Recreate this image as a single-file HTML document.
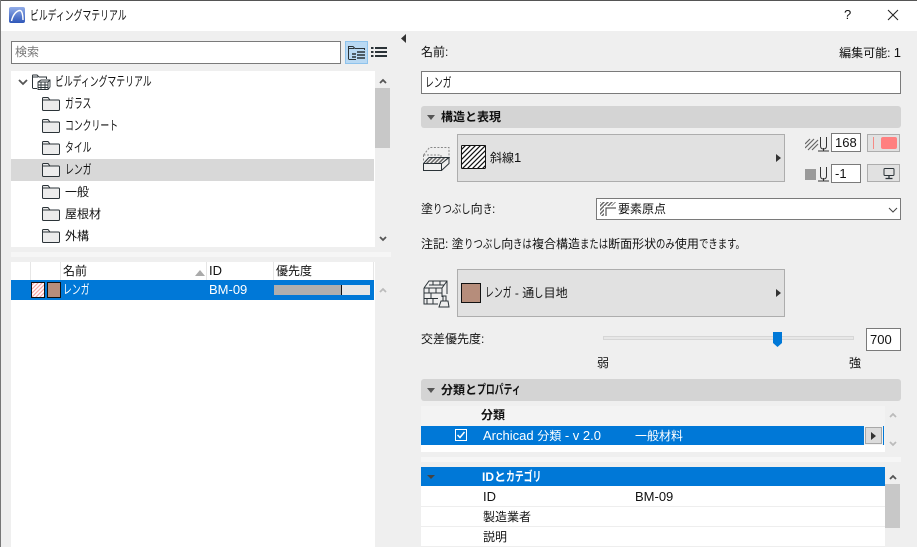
<!DOCTYPE html>
<html><head><meta charset="utf-8"><style>
html,body{margin:0;padding:0;width:917px;height:547px;overflow:hidden;background:#efefef}
body{position:relative;font:12px/16px "Liberation Sans","Noto Sans CJK JP",sans-serif;color:#111}
.a,.t,svg.a{position:absolute}
.t{white-space:nowrap;height:16px;line-height:16px}
.inp{position:absolute;box-sizing:border-box;background:#fff;border:1px solid #7a7a7a}
.btn{position:absolute;box-sizing:border-box;background:#e1e1e1;border:1px solid #adadad}
.sec{position:absolute;left:421px;width:480px;height:22px;background:#d4d4d4;border-radius:3px}
.b{font-weight:bold}
.w{color:#fff}
.l{font-size:13px}
.k{display:inline-block;font-size:13px;transform:scaleX(.68);transform-origin:0 50%;margin-right:calc(var(--n)*-4.16px)}
.h{display:inline-block;transform:scaleX(.78);transform-origin:0 50%;margin-right:calc(var(--n)*-2.64px)}
</style></head><body>
<svg width="0" height="0" style="position:absolute"><defs>
<symbol id="fd" viewBox="0 0 18 14"><path d="M.5 12.500V1.500Q.5.5 1.500.5H6L8 3H16.500Q17.500 3 17.500 4V12.500Q17.500 13.500 16.500 13.500H1.500Q.5 13.500.5 12.500Z" fill="#ececec" stroke="#2b3338"/><path d="M1 3H8" stroke="#2b3338" fill="none"/></symbol>
<pattern id="h1" width="5" height="5" patternUnits="userSpaceOnUse"><path d="M-1 6L6-1M-1 1L1-1M4 6L6 4" stroke="#111" stroke-width="1.200"/></pattern>
<pattern id="h2" width="4" height="4" patternUnits="userSpaceOnUse"><path d="M-1 5L5-1M-1 1L1-1M3 5L5 3" stroke="#f7a5a5" stroke-width="1.200"/></pattern>
<pattern id="h3" width="4" height="4" patternUnits="userSpaceOnUse"><path d="M-1 5L5-1M-1 1L1-1M3 5L5 3" stroke="#666" stroke-width="1.500"/></pattern>
<linearGradient id="lg" x1="0" y1="0" x2="0" y2="1"><stop offset="0" stop-color="#92ade8"/><stop offset="1" stop-color="#2f57b8"/></linearGradient>
</defs></svg>

<!-- frame & title -->
<div class="a" style="left:0;top:0;width:917px;height:31px;background:#fff"></div>
<div class="a" style="left:0;top:0;width:917px;height:1px;background:#555"></div>
<div class="a" style="left:0;top:0;width:1px;height:547px;background:#777"></div>
<svg class="a" style="left:9px;top:7px" width="16" height="16" viewBox="0 0 16 16"><rect width="16" height="16" rx="2" fill="url(#lg)"/><path d="M2.500 14C4 7 8 3.500 11 3.500C13 3.500 14 8 14 13" fill="none" stroke="#fff" stroke-width="1.400"/></svg>
<div class="t" style="left:30px;top:8px"><span class="k" style="--n:11">ビルディングマテリアル</span></div>
<div class="t" style="left:844px;top:7px;font-size:13px">?</div>
<svg class="a" style="left:887px;top:9px" width="12" height="12"><path d="M1 1L11 11M11 1L1 11" stroke="#222" fill="none"/></svg>

<!-- search -->
<div class="inp" style="left:11px;top:41px;width:330px;height:23px"></div>
<div class="t" style="left:15px;top:44px;color:#777">検索</div>
<div class="a" style="left:345px;top:41px;width:23px;height:23px;box-sizing:border-box;background:#b9d9f3;border:1px solid #8fc3ec"></div>
<svg class="a" style="left:348px;top:45px" width="18" height="16" fill="none" stroke="#2b3338"><path d="M.5 14V1.500H5L7 3.500H16.500V5M1 3.500H6M.5 14.500H8"/><path d="M9 7H17M9 10H17M9 13H17M4 9H8M4 12H8" stroke-width="1.500"/></svg>
<svg class="a" style="left:371px;top:46px" width="17" height="12" fill="#2b3338"><rect x="0" y="1" width="2.500" height="2"/><rect x="4" y="1" width="12" height="2"/><rect x="0" y="5" width="2.500" height="2"/><rect x="4" y="5" width="12" height="2"/><rect x="0" y="9" width="2.500" height="2"/><rect x="4" y="9" width="12" height="2"/></svg>
<svg class="a" style="left:401px;top:34px" width="5" height="9"><path d="M5 0V9L0 4.500Z" fill="#333"/></svg>

<!-- tree -->
<div class="a" style="left:11px;top:71px;width:364px;height:176px;background:#fff"></div>
<div class="a" style="left:11px;top:159px;width:363px;height:22px;background:#d8d8d8"></div>
<svg class="a" style="left:18px;top:79px" width="10" height="7"><path d="M1 1L5 5L9 1" stroke="#555" stroke-width="1.800" fill="none"/></svg>
<svg class="a" style="left:32px;top:74px" width="19" height="17" fill="none" stroke="#2b3338"><path d="M.5 14V1.500Q.5 1 1 1H5L7 3H14.500V5M1 3H6M.5 14.500H5"/><path d="M6 8L9 6H18V13L16 15.500H6ZM6 8H16V15.500M16 8L18 6M6 11H16M6 13.500H16M9 8V15.500M13 8V15.500" stroke-width=".9"/></svg>
<div class="t" style="left:55px;top:74px"><span class="k" style="--n:11">ビルディングマテリアル</span></div>
<svg class="a" style="left:42px;top:97px" width="18" height="14"><use href="#fd"/></svg><div class="t" style="left:65px;top:96px"><span class="k" style="--n:3">ガラス</span></div>
<svg class="a" style="left:42px;top:119px" width="18" height="14"><use href="#fd"/></svg><div class="t" style="left:65px;top:118px"><span class="k" style="--n:6">コンクリート</span></div>
<svg class="a" style="left:42px;top:141px" width="18" height="14"><use href="#fd"/></svg><div class="t" style="left:65px;top:140px"><span class="k" style="--n:3">タイル</span></div>
<svg class="a" style="left:42px;top:163px" width="18" height="14"><use href="#fd"/></svg><div class="t" style="left:65px;top:162px"><span class="k" style="--n:3">レンガ</span></div>
<svg class="a" style="left:42px;top:185px" width="18" height="14"><use href="#fd"/></svg><div class="t" style="left:65px;top:184px">一般</div>
<svg class="a" style="left:42px;top:207px" width="18" height="14"><use href="#fd"/></svg><div class="t" style="left:65px;top:206px">屋根材</div>
<svg class="a" style="left:42px;top:229px" width="18" height="14"><use href="#fd"/></svg><div class="t" style="left:65px;top:228px">外構</div>
<!-- tree scrollbar -->
<div class="a" style="left:375px;top:88px;width:15px;height:60px;background:#c8c8c8"></div>
<svg class="a" style="left:379px;top:78px" width="8" height="6"><path d="M1 5L4 2L7 5" stroke="#555" stroke-width="1.800" fill="none"/></svg>
<svg class="a" style="left:379px;top:236px" width="8" height="6"><path d="M1 1L4 4L7 1" stroke="#555" stroke-width="1.800" fill="none"/></svg>

<!-- splitter -->
<div class="a" style="left:11px;top:252px;width:380px;height:5px;background:#f6f6f6"></div>

<!-- list -->
<div class="a" style="left:11px;top:262px;width:364px;height:285px;background:#fff"></div>
<div class="a" style="left:30px;top:262px;width:1px;height:18px;background:#e6e6e6"></div>
<div class="a" style="left:60px;top:262px;width:1px;height:18px;background:#e6e6e6"></div>
<div class="a" style="left:206px;top:262px;width:1px;height:18px;background:#e6e6e6"></div>
<div class="a" style="left:273px;top:262px;width:1px;height:18px;background:#e6e6e6"></div>
<div class="a" style="left:373px;top:262px;width:1px;height:18px;background:#e6e6e6"></div>
<div class="t" style="left:63px;top:263px">名前</div>
<svg class="a" style="left:195px;top:270px" width="10" height="6"><path d="M0 6L5 0L10 6Z" fill="#aaa"/></svg>
<div class="t l" style="left:209px;top:263px">ID</div>
<div class="t" style="left:276px;top:263px">優先度</div>
<div class="a" style="left:11px;top:280px;width:363px;height:20px;background:#0078d7"></div>
<svg class="a" style="left:31px;top:282px" width="14" height="16"><rect width="14" height="16" fill="#fff"/><rect width="14" height="16" fill="url(#h2)"/><rect x=".5" y=".5" width="13" height="15" fill="none" stroke="#111"/></svg>
<div class="a" style="left:47px;top:282px;width:14px;height:16px;box-sizing:border-box;background:#b68d7b;border:1px solid #111"></div>
<div class="t w" style="left:63px;top:282px"><span class="k" style="--n:3">レンガ</span></div>
<div class="t w l" style="left:209px;top:282px">BM-09</div>
<div class="a" style="left:274px;top:285px;width:96px;height:10px;background:#e6e6e6"></div>
<div class="a" style="left:274px;top:285px;width:67px;height:10px;background:#aeaeae"></div>
<div class="a" style="left:341px;top:285px;width:1px;height:10px;background:#111"></div>
<svg class="a" style="left:379px;top:287px" width="8" height="6"><path d="M1 5L4 2L7 5" stroke="#bbb" stroke-width="1.800" fill="none"/></svg>

<!-- right header -->
<div class="t" style="left:421px;top:44px">名前:</div>
<div class="t" style="right:16px;top:45px">編集可能: <span class="l">1</span></div>
<div class="inp" style="left:421px;top:71px;width:480px;height:23px"></div>
<div class="t" style="left:425px;top:75px"><span class="k" style="--n:3">レンガ</span></div>

<!-- section 1 -->
<div class="sec" style="top:106px"></div>
<svg class="a" style="left:427px;top:115px" width="8" height="5"><path d="M0 0H8L4 5Z" fill="#555"/></svg>
<div class="t b" style="left:441px;top:109px">構造と表現</div>
<svg class="a" style="left:423px;top:147px" width="27" height="25" fill="none" stroke="#2b3338"><path d="M.5 8L6.500.5H26V10M.5 8V15M.5 8H18V10" stroke="#888" stroke-dasharray="2 1.500"/><path d="M.5 16.500L6 10.500H26L18.500 16.500Z" fill="url(#h3)"/><path d="M.5 16.500V23.500H18.500V16.500H.5M18.500 23.500L26 16.500V10.500"/></svg>
<div class="btn" style="left:457px;top:134px;width:328px;height:48px"></div>
<svg class="a" style="left:461px;top:145px" width="25" height="24"><rect width="25" height="24" rx="1" fill="#fff"/><rect width="25" height="24" rx="1" fill="url(#h1)"/><rect x=".5" y=".5" width="24" height="23" rx="1" fill="none" stroke="#111"/></svg>
<div class="t" style="left:490px;top:150px">斜線<span class="l">1</span></div>
<svg class="a" style="left:776px;top:154px" width="5" height="8"><path d="M0 0L5 4L0 8Z" fill="#333"/></svg>

<svg class="a" style="left:805px;top:136px" width="26" height="16" fill="none"><path d="M0 12L9 3M3 14L13 4M7 14L13 8M0 8L5 3" stroke="#666" stroke-width="1.200"/><path d="M15.500 1V10Q15.500 13 18.500 13Q21.500 13 21.500 10V1" stroke="#333"/><path d="M13 15H24M18.500 12V15" stroke="#333"/></svg>
<div class="inp" style="left:831px;top:133px;width:30px;height:19px"></div>
<div class="t l" style="left:835px;top:135px">168</div>
<div class="btn" style="left:867px;top:134px;width:33px;height:18px"></div>
<div class="a" style="left:873px;top:137px;width:1px;height:12px;background:#f58a85"></div>
<div class="a" style="left:881px;top:137px;width:16px;height:12px;background:#ff8080;border-radius:2px"></div>

<div class="a" style="left:805px;top:169px;width:11px;height:11px;background:#9a9a9a"></div>
<svg class="a" style="left:818px;top:166px" width="13" height="16" fill="none"><path d="M2.500 1V10Q2.500 13 5.500 13Q8.500 13 8.500 10V1" stroke="#333"/><path d="M0 15H11M5.500 12V15" stroke="#333"/></svg>
<div class="inp" style="left:831px;top:164px;width:30px;height:19px"></div>
<div class="t l" style="left:835px;top:166px">-1</div>
<div class="btn" style="left:867px;top:164px;width:33px;height:18px"></div>
<svg class="a" style="left:883px;top:168px" width="13" height="12" fill="none" stroke="#2b3338"><rect x="1" y=".5" width="10" height="7" rx="1"/><path d="M6 8V10M2.500 10.500H9.500" stroke-width="1.300"/></svg>

<div class="t" style="left:421px;top:201px">塗<span class="h" style="--n:4">りつぶし</span>向<span class="h" style="--n:1">き</span>:</div>
<div class="inp" style="left:596px;top:198px;width:305px;height:22px"></div>
<svg class="a" style="left:600px;top:202px" width="17" height="14"><path d="M0 0H16L12 4H4V14H0Z" fill="#fff"/><path d="M0 0H16L12 4H4V14H0Z" fill="url(#h3)"/><path d="M6 14V6H16" stroke="#333" fill="none"/></svg>
<div class="t" style="left:618px;top:201px">要素原点</div>
<svg class="a" style="left:888px;top:207px" width="10" height="6"><path d="M1 1L5 5L9 1" stroke="#444" fill="none"/></svg>

<div class="t" style="left:421px;top:236px">注記: 塗<span class="h" style="--n:4">りつぶし</span>向<span class="h" style="--n:2">きは</span>複合構造<span class="h" style="--n:3">または</span>断面形状<span class="h" style="--n:2">のみ</span>使用<span class="h" style="--n:5">できます。</span></div>

<!-- building material -->
<svg class="a" style="left:423px;top:280px" width="28" height="28" fill="none" stroke="#2b3338"><path d="M1 8L6 1H24V14M1 8H19V17M19 8L24 1M1 8V24H15M1 13H19M1 18.500H15M6 8V13M13 8V13M8 13V18.500M4 18.500V24M10 18.500V24M6 5H21M10 1V5M17 1V5"/><path d="M20 16H23V21H20ZM18 21H25L26 27H16Z" fill="#eee"/></svg>
<div class="btn" style="left:457px;top:269px;width:328px;height:48px"></div>
<div class="a" style="left:461px;top:283px;width:20px;height:20px;box-sizing:border-box;background:#b68d7b;border:1px solid #111"></div>
<div class="t" style="left:485px;top:285px"><span class="k" style="--n:3">レンガ</span> - 通<span class="h" style="--n:1">し</span>目地</div>
<svg class="a" style="left:776px;top:289px" width="5" height="8"><path d="M0 0L5 4L0 8Z" fill="#333"/></svg>

<div class="t" style="left:421px;top:331px">交差優先度:</div>
<div class="a" style="left:603px;top:336px;width:251px;height:4px;box-sizing:border-box;background:#e7e7e7;border:1px solid #d6d6d6"></div>
<svg class="a" style="left:773px;top:332px" width="9" height="15"><path d="M0 0H9V11L4.500 15L0 11Z" fill="#0078d7"/></svg>
<div class="inp" style="left:866px;top:328px;width:35px;height:23px"></div>
<div class="t l" style="left:870px;top:332px">700</div>
<div class="t" style="left:597px;top:355px">弱</div>
<div class="t" style="left:849px;top:355px">強</div>

<!-- section 2 -->
<div class="sec" style="top:379px"></div>
<svg class="a" style="left:427px;top:388px" width="8" height="5"><path d="M0 0H8L4 5Z" fill="#555"/></svg>
<div class="t b" style="left:441px;top:382px">分類と<span class="k" style="--n:5">プロパティ</span></div>

<div class="a" style="left:421px;top:406px;width:464px;height:20px;background:#f3f3f3"></div>
<div class="t b" style="left:481px;top:407px">分類</div>
<div class="a" style="left:421px;top:426px;width:443px;height:19px;background:#0078d7"></div>
<div class="a" style="left:421px;top:445px;width:464px;height:7px;background:#fff"></div>
<div class="a" style="left:864px;top:426px;width:21px;height:19px;background:#f3f3f3"></div>
<div class="a" style="left:883px;top:426px;width:1px;height:19px;background:#0078d7"></div>
<div class="btn" style="left:865px;top:427px;width:17px;height:17px;background:#dcdcdc;border-color:#a8a8a8"></div>
<svg class="a" style="left:871px;top:432px" width="5" height="8"><path d="M0 0L5 4L0 8Z" fill="#333"/></svg>
<svg class="a" style="left:455px;top:429px" width="12" height="12"><rect x=".5" y=".5" width="11" height="11" fill="#0078d7" stroke="#fff"/><path d="M2.500 6L5 8.500L9.500 3" stroke="#fff" stroke-width="1.500" fill="none"/></svg>
<div class="t w" style="left:483px;top:428px"><span class="l">Archicad </span>分類<span class="l"> - v 2.0</span></div>
<div class="t w" style="left:635px;top:428px">一般材料</div>
<svg class="a" style="left:889px;top:412px" width="8" height="6"><path d="M1 5L4 2L7 5" stroke="#bbb" stroke-width="1.800" fill="none"/></svg>
<svg class="a" style="left:889px;top:441px" width="8" height="6"><path d="M1 1L4 4L7 1" stroke="#bbb" stroke-width="1.800" fill="none"/></svg>

<div class="a" style="left:421px;top:457px;width:480px;height:5px;background:#f6f6f6"></div>

<div class="a" style="left:421px;top:467px;width:464px;height:80px;background:#fff"></div>
<div class="a" style="left:421px;top:467px;width:464px;height:19px;background:#0078d7"></div>
<svg class="a" style="left:427px;top:475px" width="8" height="4"><path d="M0 0H8L4 4Z" fill="#444"/></svg>
<div class="t b w" style="left:482px;top:469px">IDと<span class="k" style="--n:4">カテゴリ</span></div>
<div class="a" style="left:421px;top:506px;width:464px;height:1px;background:#eee"></div>
<div class="a" style="left:421px;top:526px;width:464px;height:1px;background:#eee"></div>
<div class="a" style="left:421px;top:546px;width:464px;height:1px;background:#eee"></div>
<div class="t l" style="left:483px;top:489px">ID</div>
<div class="t l" style="left:635px;top:489px">BM-09</div>
<div class="t" style="left:483px;top:509px">製造業者</div>
<div class="t" style="left:483px;top:529px">説明</div>
<div class="a" style="left:885px;top:484px;width:15px;height:44px;background:#c8c8c8"></div>
<svg class="a" style="left:889px;top:474px" width="8" height="6"><path d="M1 5L4 2L7 5" stroke="#555" stroke-width="1.800" fill="none"/></svg>
</body></html>
